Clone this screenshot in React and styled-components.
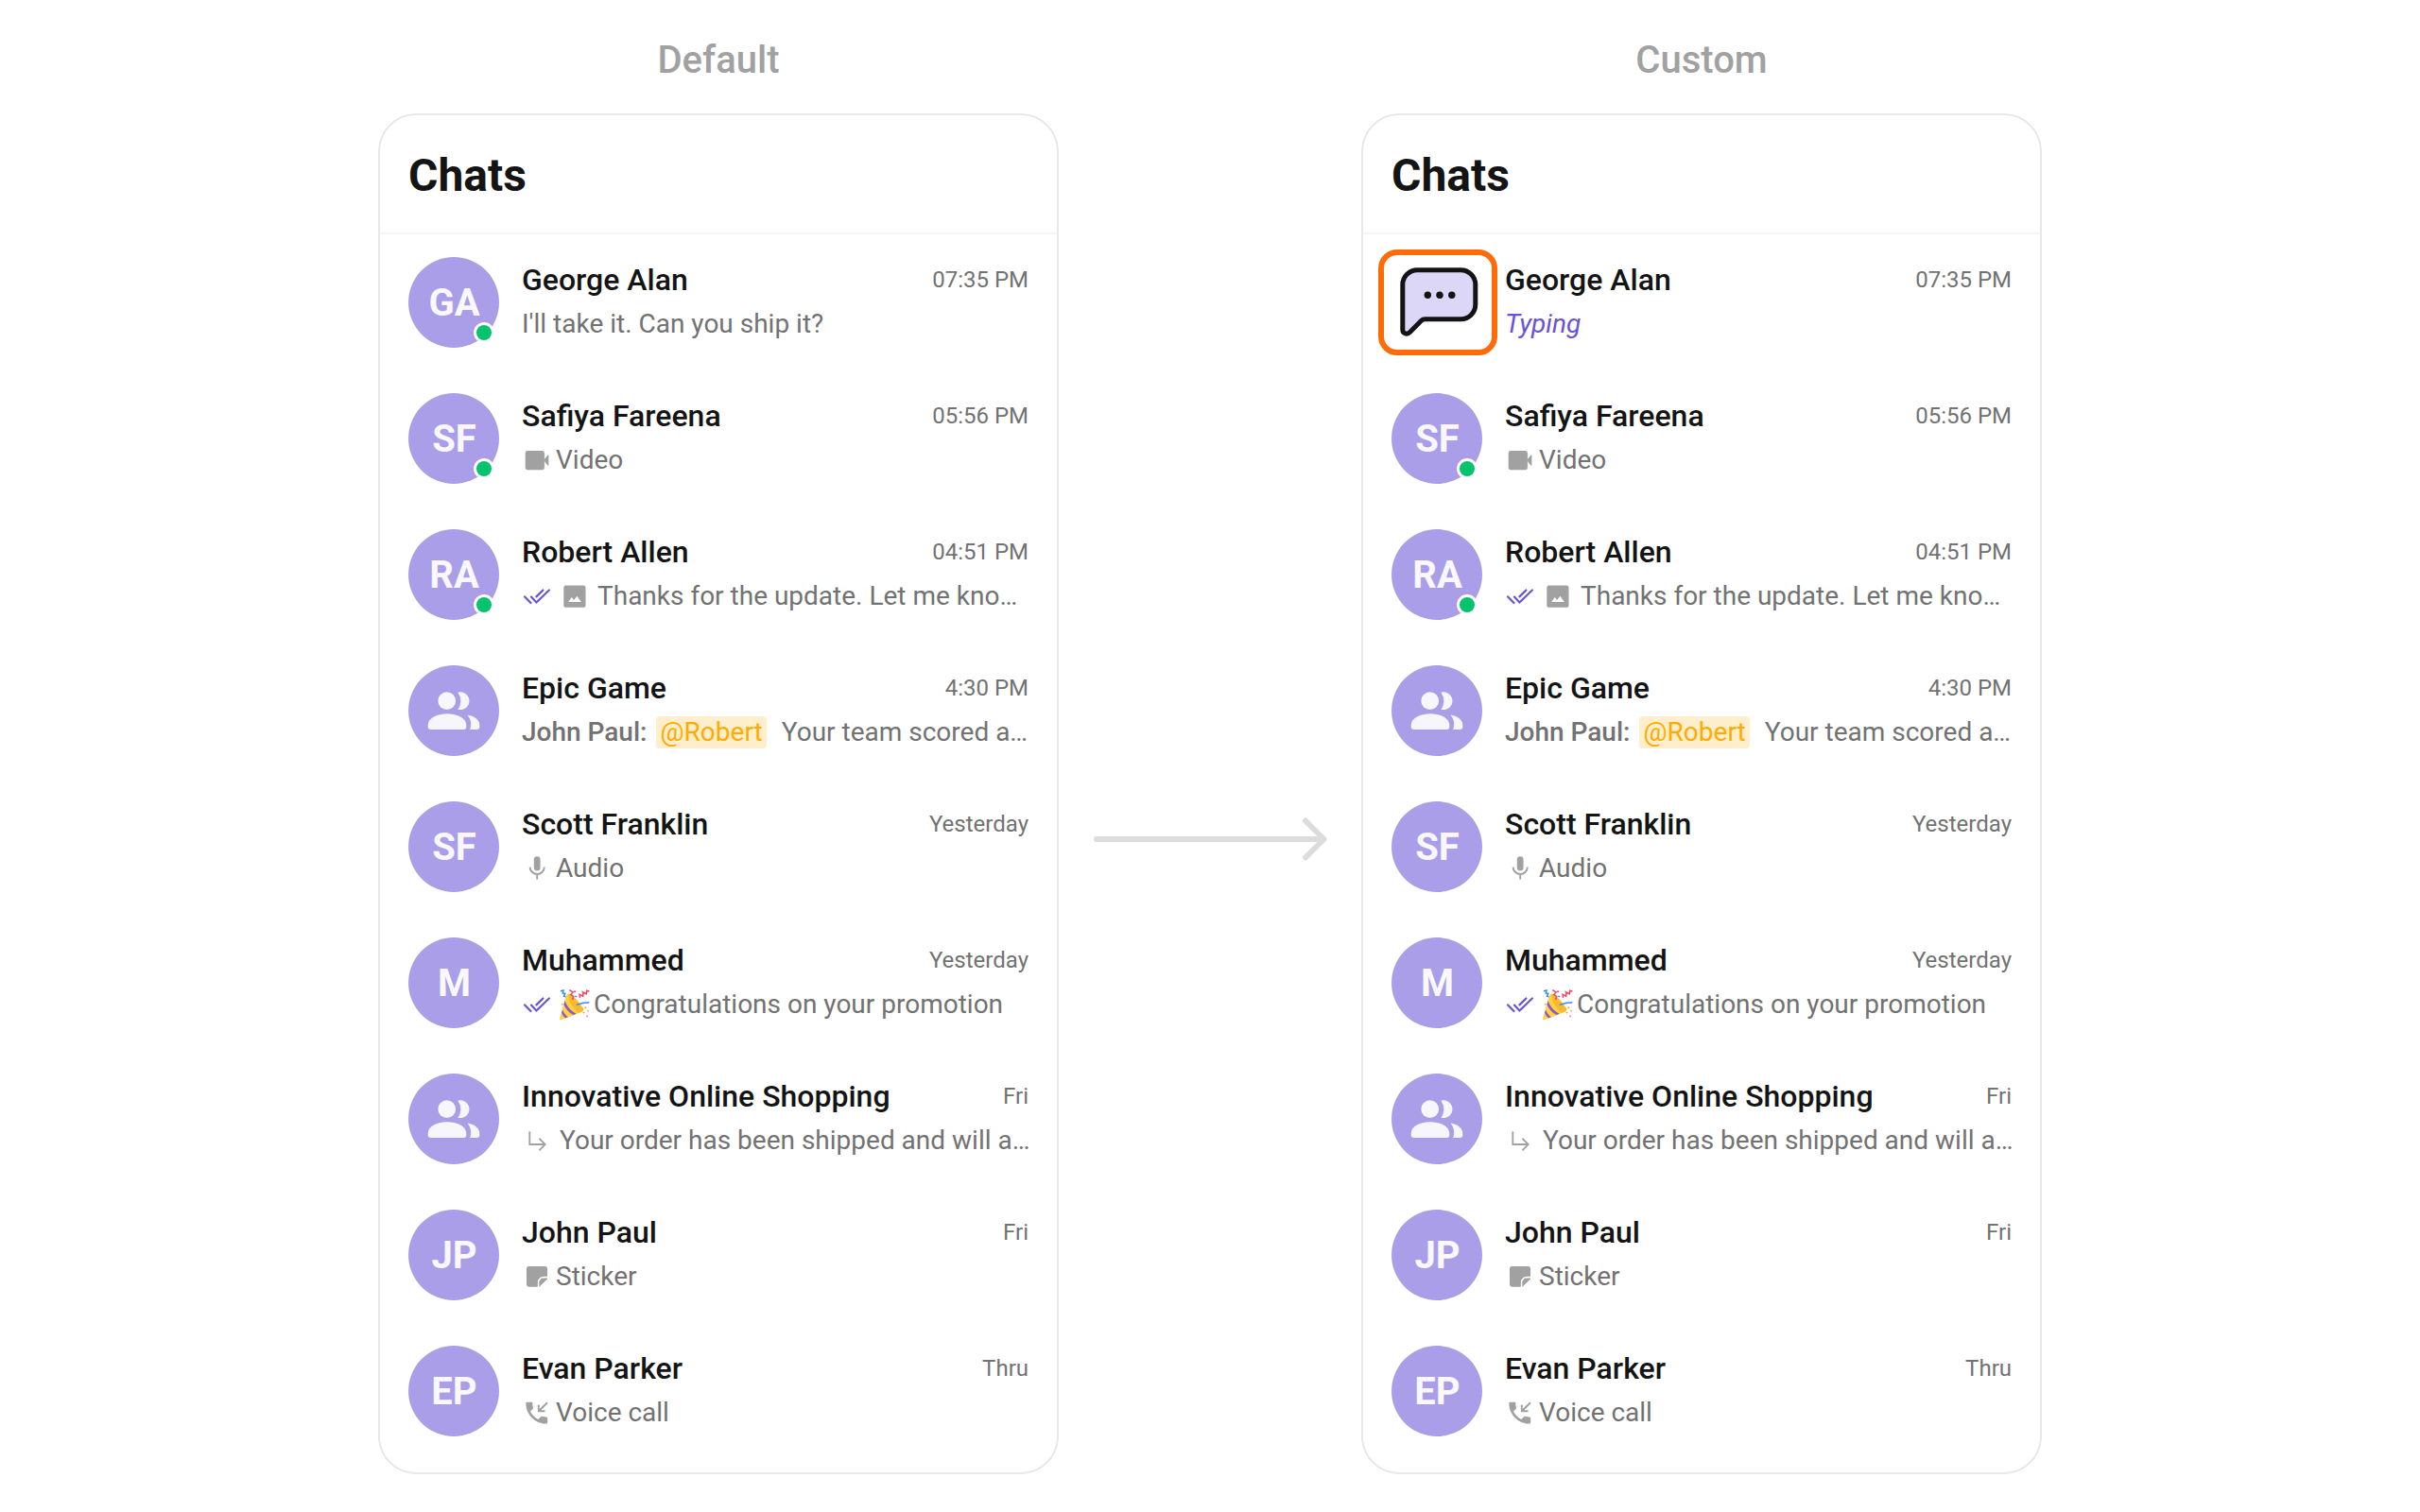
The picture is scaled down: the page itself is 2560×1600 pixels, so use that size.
import React from 'react';
import styled, { createGlobalStyle } from 'styled-components';

const GlobalStyle = createGlobalStyle`
  * {
    box-sizing: border-box;
  }

  body {
    margin: 0;
    background: #ffffff;
    color: #141414;
    font-family: Roboto, 'Liberation Sans', sans-serif;
  }
`;

const Page = styled.main`
  display: grid;
  grid-template-columns: minmax(0, 720px) 320px minmax(0, 720px);
  justify-content: center;
  align-items: center;
  padding: 40px;
`;

const Column = styled.section`
  display: flex;
  flex-direction: column;
  gap: 32px;
`;

const ColumnTitle = styled.h2`
  margin: 0;
  color: #a1a1a1;
  font-size: 40px;
  font-weight: 500;
  line-height: 48px;
  text-align: center;
`;

const Card = styled.div`
  background: #ffffff;
  border: 2px solid #e8e8e8;
  border-radius: 40px;
  padding-bottom: 14px;
`;

const CardHeader = styled.header`
  padding: 34px 30px 30px;
  border-bottom: 2px solid #f5f5f5;
`;

const Heading = styled.h1`
  margin: 0;
  font-size: 48px;
  font-weight: 700;
  line-height: 60px;
`;

const ChatList = styled.ul`
  list-style: none;
  margin: 0;
  padding: 0;
`;

const ChatItem = styled.li`
  display: flex;
  gap: 24px;
  padding: 24px 30px;
`;

const Avatar = styled.div`
  position: relative;
  display: flex;
  flex: none;
  align-items: center;
  justify-content: center;
  width: 96px;
  height: 96px;
  border-radius: 50%;
  background: ${props => props.$plain ? 'transparent' : '#aa9ee8'};
`;

const Initials = styled.span`
  padding: 2px 0 0 1px;
  color: #f9f8fd;
  font-size: 40px;
  font-weight: 700;
  line-height: 48px;
`;

const OnlineDot = styled.span`
  position: absolute;
  right: 5px;
  bottom: 5px;
  width: 22px;
  height: 22px;
  border: 3px solid #ffffff;
  border-radius: 50%;
  background: #09c26f;
`;

const Highlight = styled.span`
  position: absolute;
  top: -8px;
  right: -16px;
  bottom: -8px;
  left: -14px;
  border: 6px solid #ff6b08;
  border-radius: 20px;
`;

const Body = styled.div`
  display: flex;
  flex: 1;
  flex-direction: column;
  gap: 8px;
  min-width: 0;
  padding-top: 4px;
`;

const TopLine = styled.div`
  display: flex;
  align-items: center;
  justify-content: space-between;
`;

const Name = styled.span`
  font-size: 32px;
  font-weight: 500;
  line-height: 40px;
`;

const Time = styled.time`
  color: #727272;
  font-size: 24px;
  line-height: 40px;
`;

const Preview = styled.div`
  display: flex;
  align-items: center;
  gap: ${props => props.$gap || 8}px;
  color: ${props => props.$typing ? '#6852d6' : '#727272'};
  font-size: 28px;
  font-style: ${props => props.$typing ? 'italic' : 'normal'};
  line-height: 38px;
  white-space: nowrap;
`;

const Sender = styled.span`
  font-weight: 500;
`;

const Mention = styled.span`
  margin-right: 6px;
  padding: 0 4px;
  border-radius: 4px;
  background: #ffeecc;
  color: #ffab00;
  line-height: 34px;
`;

const WithEmoji = styled.span`
  display: flex;
  align-items: center;
  gap: 4px;
`;

const Icon = styled.svg`
  flex: none;
  width: 32px;
  height: 32px;
  fill: #a1a1a1;
`;

const AvatarArt = styled.svg`
  width: 96px;
  height: 96px;
`;

const ArrowArt = styled.svg`
  justify-self: center;
  width: 248px;
  height: 50px;
  margin-top: 176px;
`;

const VideoIcon = () => (
  <Icon viewBox="0 0 32 32">
    <rect x="3.7" y="6" width="20.2" height="20.3" rx="2.4" />
    <path d="M23 16.1l4.4-5.3c.4-.4 1-.2 1 .4v9.8c0 .6-.6.8-1 .4z" />
  </Icon>
);

const ReadIcon = () => (
  <Icon viewBox="0 0 32 32">
    <path
      d="M3.1 16.4l6.4 6.6M10 16.6l5.4 5.9L28.9 9.5M15.4 16.4l7-6.9"
      fill="none" stroke="#6852d6" strokeWidth="2.2" strokeLinecap="round"
    />
  </Icon>
);

const ImageIcon = () => (
  <Icon viewBox="0 0 32 32">
    <rect x="4.3" y="4.6" width="23.2" height="23.2" rx="2.6" />
    <path d="M9.2 22l3.6-4.9 2.3 2.9 3.3-4.2 4.5 6.2z" fill="#fff" />
  </Icon>
);

const MicIcon = () => (
  <Icon viewBox="0 0 32 32">
    <rect x="12.8" y="3.3" width="6.8" height="15" rx="3.4" />
    <path
      d="M8.6 14.4a7.6 7.6 0 0 0 15.2 0M16.2 22v5.6"
      fill="none" stroke="#a1a1a1" strokeWidth="1.9"
    />
  </Icon>
);

const ReplyIcon = () => (
  <Icon viewBox="0 0 32 32">
    <path
      d="M8.3 6.2V20h16.4M18.4 13.7l6.3 6.3-6.3 6.3"
      fill="none" stroke="#a1a1a1" strokeWidth="1.8"
    />
  </Icon>
);

const StickerIcon = () => (
  <Icon viewBox="0 0 32 32">
    <path d="M7.4 5h17.2A2.4 2.4 0 0 1 27 7.4v8.3h-3.4c-4 0-6.8 2.8-6.8 6.8v4.2H7.4A2.4 2.4 0 0 1 5 24.3V7.4A2.4 2.4 0 0 1 7.4 5z" />
    <path d="M27 17.4v1l-8.2 8.2h-.5v-4c0-3.2 2-5.2 5.2-5.2z" />
  </Icon>
);

const CallIcon = () => (
  <Icon viewBox="0 0 32 32">
    <path
      transform="translate(.5 .9) scale(1.27)"
      d="M20 15.5c-1.25 0-2.45-.2-3.57-.57-.35-.11-.74-.03-1.02.24l-2.2 2.2c-2.83-1.44-5.15-3.75-6.59-6.59l2.2-2.21c.28-.26.36-.65.25-1C8.7 6.45 8.5 5.25 8.5 4c0-.55-.45-1-1-1H4c-.55 0-1 .45-1 1 0 9.39 7.61 17 17 17 .55 0 1-.45 1-1v-3.5c0-.55-.45-1-1-1z"
    />
    <path
      d="M27 5.2l-9.2 9.1M17.8 7.6v6.7h6.8"
      fill="none" stroke="#a1a1a1" strokeWidth="1.9"
    />
  </Icon>
);

const PartyIcon = () => (
  <Icon viewBox="0 0 32 32" role="img" aria-label="Party popper">
    {/* cone */}
    <path d="M.4 31L6.8 7.4C7.6 4.8 10.300 4.200 12.500 6c4.800 3.800 9.500 9.200 12.200 13.700 1.200 2.100.5 3.300-1.200 4L1.500 31.900c-.8.300-1.300-.2-1.100-.9z" fill="#f5bb2c" />
    <path d="M.4 31L6.800 7.400c.4-1.400 1.300-2.200 2.400-2.300C9.500 12 13 19.500 20 25L1.500 31.900c-.8.300-1.300-.2-1.100-.9z" fill="#fdd33e" />
    <path d="M5.600 11.800c1.600 5.600 6 10.900 12 14l-3.300 1.200C9.600 24.300 6 20 4.500 15.900zM3 21.400c1.200 3.200 3.200 5.700 5.900 7.800l-2.800 1C4.200 28.700 2.900 26.900 2.100 24.800z" fill="#9256c9" />
    {/* streamers */}
    <path d="M.9 1.800l3-.7-.6 2.900 2.500.3-1.300 2.800 2 .6M17.800 16.400c4-1.600 8-2.500 13.500-2.600" fill="none" stroke="#3d83f0" strokeWidth="1.500" />
    <path d="M10.400.6l3.600 2.400-2.200 2.600 3 1.700-1.300 3.700M21.500 8.800l-.4-3.500 3.600 2 .3-4.300 3.200 1.900.5-3.700 2.700 1" fill="none" stroke="#ef4560" strokeWidth="1.500" />
    {/* confetti */}
    <path d="M16 1l1.400 1.200L16 3.500l-1.300-1.300zM23.500 1.200l1.500 1-1.500 1.200zM2.500 14.700l1.400 1-1.400 1.400z" fill="#ef4560" />
    <path d="M17 6.200l1.500 1.200L17 8.600l-1.200-1.200z" fill="#4a8df5" />
    <path d="M27.500 18l1.400 1.200-1.400 1.200-1.200-1.200zM30 21.700l1.200 1-1.200 1.200-1-1.200zM25.500 23.500l1.400 1.100-1.400 1.200-1.200-1.200z" fill="#f6a63a" />
    <path d="M29 27.200l1.400 1.200-1.400 1.300-1.300-1.300z" fill="#f39ab2" />
  </Icon>
);

const GroupArt = () => (
  <AvatarArt viewBox="0 0 96 96" fill="#f7f6fd">
    <circle cx="40.7" cy="37.7" r="9.4" />
    <path d="M52.3 28.7A9.4 9.4 0 1 1 52.3 46.7A14.7 14.7 0 0 0 52.3 28.7z" />
    <path d="M20.7 63.5C20.7 56.5 29 51.3 41 51.3S61.3 56.5 61.3 63.5V65a3 3 0 0 1-3 3H23.7a3 3 0 0 1-3-3z" />
    <path d="M62.3 52.4C70.5 53.5 75.3 58 75.3 63.5V65a3 3 0 0 1-3 3H65.2C67.2 62 66 56.5 62.3 52.4z" />
  </AvatarArt>
);

const TypingArt = () => (
  <AvatarArt viewBox="0 0 96 96" fill="#141414">
    <path
      d="M11.8 29.3A15.5 15.5 0 0 1 27.3 13.8H73.3A15.5 15.5 0 0 1 88.8 29.3V50.3A15.5 15.5 0 0 1 73.3 65.8H35.5Q33 65.8 31.3 67.5L19.5 79.5C16.5 82.5 11.8 81 11.8 77z"
      fill="#dcd7f6" stroke="#141414" strokeWidth="5"
    />
    <circle cx="38.3" cy="40.3" r="3.7" />
    <circle cx="51" cy="40.3" r="3.7" />
    <circle cx="63.8" cy="40.3" r="3.7" />
  </AvatarArt>
);

const Arrow = () => (
  <ArrowArt viewBox="0 0 248 50" fill="none" stroke="#dcdcdc" strokeWidth="6" strokeLinecap="round" strokeLinejoin="round">
    <path d="M4 25H244M225 5.5L244.5 25L225 44.5" />
  </ArrowArt>
);

const chats = [
  { name: 'George Alan', initials: 'GA', online: true, time: '07:35 PM', text: "I'll take it. Can you ship it?" },
  { name: 'Safiya Fareena', initials: 'SF', online: true, time: '05:56 PM', icon: <VideoIcon />, text: 'Video', gap: 4 },
  { name: 'Robert Allen', initials: 'RA', online: true, time: '04:51 PM', read: true, icon: <ImageIcon />, text: 'Thanks for the update. Let me kno…' },
  { name: 'Epic Game', time: '4:30 PM', sender: 'John Paul:', mention: '@Robert', text: 'Your team scored a…', gap: 10 },
  { name: 'Scott Franklin', initials: 'SF', time: 'Yesterday', icon: <MicIcon />, text: 'Audio', gap: 4 },
  { name: 'Muhammed', initials: 'M', time: 'Yesterday', read: true, text: <WithEmoji><PartyIcon />Congratulations on your promotion</WithEmoji> },
  { name: 'Innovative Online Shopping', time: 'Fri', icon: <ReplyIcon />, text: 'Your order has been shipped and will a…' },
  { name: 'John Paul', initials: 'JP', time: 'Fri', icon: <StickerIcon />, text: 'Sticker', gap: 4 },
  { name: 'Evan Parker', initials: 'EP', time: 'Thru', icon: <CallIcon />, text: 'Voice call', gap: 4 },
];

const customChats = chats.map((chat, i) => (
  i === 0 ? { ...chat, typing: true, text: 'Typing' } : chat
));

const ChatAvatar = ({ chat }) => {
  if (chat.typing) {
    return (
      <Avatar $plain>
        <TypingArt />
        <Highlight />
      </Avatar>
    );
  }
  return (
    <Avatar>
      {chat.initials ? <Initials>{chat.initials}</Initials> : <GroupArt />}
      {chat.online && <OnlineDot />}
    </Avatar>
  );
};

const Chat = ({ chat }) => (
  <ChatItem>
    <ChatAvatar chat={chat} />
    <Body>
      <TopLine>
        <Name>{chat.name}</Name>
        <Time>{chat.time}</Time>
      </TopLine>
      <Preview $gap={chat.gap} $typing={chat.typing}>
        {chat.read && <ReadIcon />}
        {chat.icon}
        {chat.sender && <Sender>{chat.sender}</Sender>}
        {chat.mention && <Mention>{chat.mention}</Mention>}
        <span>{chat.text}</span>
      </Preview>
    </Body>
  </ChatItem>
);

const ChatPanel = ({ title, items }) => (
  <Column>
    <ColumnTitle>{title}</ColumnTitle>
    <Card>
      <CardHeader>
        <Heading>Chats</Heading>
      </CardHeader>
      <ChatList>
        {items.map(chat => <Chat key={chat.name} chat={chat} />)}
      </ChatList>
    </Card>
  </Column>
);

const App = () => (
  <>
    <GlobalStyle />
    <Page>
      <ChatPanel title="Default" items={chats} />
      <Arrow />
      <ChatPanel title="Custom" items={customChats} />
    </Page>
  </>
);

export default App;
